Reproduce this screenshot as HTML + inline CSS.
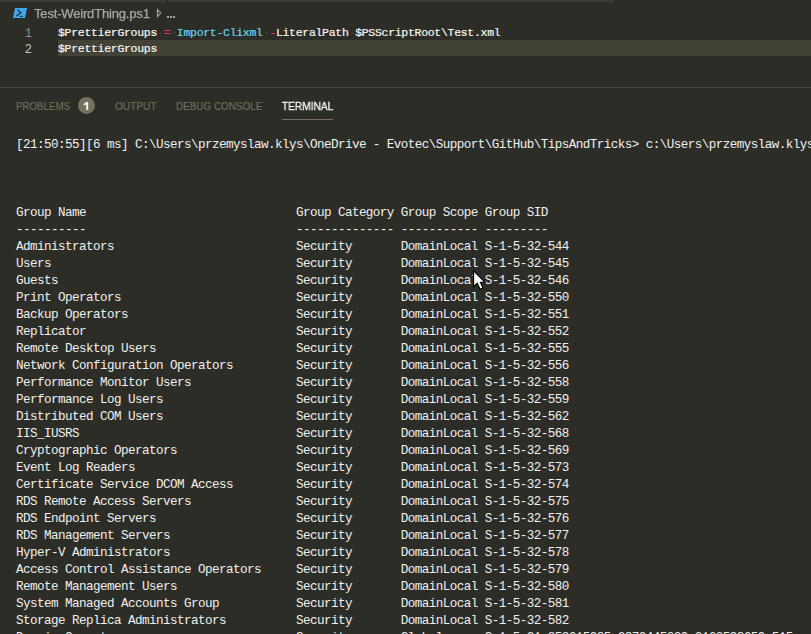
<!DOCTYPE html>
<html><head><meta charset="utf-8">
<style>
html,body{margin:0;padding:0;}
body{width:811px;height:634px;overflow:hidden;background:#2c2d26;position:relative;font-family:"Liberation Sans",sans-serif;}
.abs{position:absolute;}
#tabbar{left:167px;top:0;width:1px;height:2px;background:#23241f;}
#tabdiv2{left:615px;top:0;width:1px;height:2px;background:#23241f;}
#tab1{left:0;top:0;width:167px;height:2px;background:#3a3b35;}
#tab2{left:168px;top:0;width:447px;height:2px;background:#3a3b35;}
#crumb{left:34px;top:6px;font-size:13px;letter-spacing:-0.17px;color:#a8a8a6;-webkit-text-stroke:0.25px currentColor;will-change:transform;white-space:pre;line-height:16px;}
.ln{font-family:"Liberation Mono",monospace;font-size:12px;color:#90908a;width:32px;text-align:right;left:0;line-height:16px;margin-top:2px;}
.code{font-family:"Liberation Mono",monospace;font-size:11.5px;letter-spacing:-0.3px;color:#f8f8f2;-webkit-text-stroke:0.2px currentColor;left:58px;line-height:16px;white-space:pre;margin-top:1px;}
#hl{left:58px;top:40px;width:753px;height:16px;background:#424237;}
.ws{color:#464741;}
.op{color:#f92672;}
.fn{color:#66d9ef;}
#sep{left:0;top:87px;width:811px;height:1px;background:#47483f;}
.ptab{top:99px;font-size:11px;color:#75715e;line-height:14px;white-space:pre;will-change:transform;-webkit-text-stroke:0.15px currentColor;transform:scaleX(0.92);transform-origin:0 0;}
#badge{left:78px;top:97px;width:17px;height:17px;border-radius:50%;background:#75715e;color:#f8f8f2;font-size:11px;font-weight:bold;text-align:center;line-height:17px;will-change:transform;-webkit-text-stroke:0.2px currentColor;}
#uline{left:282px;top:119px;width:51px;height:1px;background:#75715e;}
#term{left:16px;top:137px;font-family:"Liberation Mono",monospace;font-size:12.6px;letter-spacing:-0.56px;line-height:17px;color:#f0f0f0;white-space:pre;}
</style></head><body>
<div class="abs" id="tab1"></div>
<div class="abs" id="tab2"></div>
<div class="abs" id="tabbar"></div>
<div class="abs" id="tabdiv2"></div>
<svg class="abs" style="left:10px;top:5px" width="20" height="16" viewBox="10 5 20 16">
<path d="M15 8 H27 L25 18 H13 Z" fill="#3fa7ee"/>
<path d="M17.4 9.6 L20.9 12.6 L16.4 16" stroke="#1d2b35" stroke-width="1.2" fill="none"/>
<path d="M19.8 16.4 H22.8" stroke="#1d2b35" stroke-width="1.1"/>
</svg>
<div class="abs" id="crumb">Test-WeirdThing.ps1</div>
<svg class="abs" style="left:150px;top:5px" width="30" height="17" viewBox="150 5 30 17"><path d="M157.5 9.5 L160.7 13 L157.5 16.5 Z" fill="none" stroke="#a8a8a4" stroke-width="1.1"/><rect x="167" y="16" width="2" height="2" fill="#a8a8a4"/><rect x="170" y="16" width="2" height="2" fill="#a8a8a4"/><rect x="173" y="16" width="2" height="2" fill="#a8a8a4"/></svg>
<div class="abs" id="hl"></div>
<div class="abs ln" style="top:24px">1</div>
<div class="abs ln" style="top:40px;color:#c2c2bf">2</div>
<div class="abs code" style="top:24px">$PrettierGroups<span class="ws">·</span><span class="op">=</span><span class="ws">·</span><span class="fn">Import-Clixml</span><span class="ws">·</span><span class="op">-</span>LiteralPath<span class="ws">·</span>$PSScriptRoot\Test.xml</div>
<div class="abs code" style="top:40px">$PrettierGroups</div>
<div class="abs" id="sep"></div>
<div class="abs ptab" style="left:16px;transform:scaleX(0.885)">PROBLEMS</div>
<div class="abs" id="badge"></div>
<svg class="abs" style="left:60px;top:90px" width="50" height="30" viewBox="60 90 50 30"><path d="M86 102 H88.2 V110 H86.2 V104.6 L83.7 105.5 V103.8 Q85.4 103.2 86 102 Z" fill="#f4f4f0"/></svg>
<div class="abs ptab" style="left:115px">OUTPUT</div>
<div class="abs ptab" style="left:176px;transform:scaleX(0.90)">DEBUG CONSOLE</div>
<div class="abs ptab" style="left:282px;color:#f8f8f2;-webkit-text-stroke:0.3px currentColor">TERMINAL</div>
<div class="abs" id="uline"></div>
<div class="abs" id="term">[21:50:55][6 ms] C:\Users\przemyslaw.klys\OneDrive - Evotec\Support\GitHub\TipsAndTricks&gt; c:\Users\przemyslaw.klys\OneDrive



Group Name                              Group Category Group Scope Group SID
----------                              -------------- ----------- ---------
Administrators                          Security       DomainLocal S-1-5-32-544
Users                                   Security       DomainLocal S-1-5-32-545
Guests                                  Security       DomainLocal S-1-5-32-546
Print Operators                         Security       DomainLocal S-1-5-32-550
Backup Operators                        Security       DomainLocal S-1-5-32-551
Replicator                              Security       DomainLocal S-1-5-32-552
Remote Desktop Users                    Security       DomainLocal S-1-5-32-555
Network Configuration Operators         Security       DomainLocal S-1-5-32-556
Performance Monitor Users               Security       DomainLocal S-1-5-32-558
Performance Log Users                   Security       DomainLocal S-1-5-32-559
Distributed COM Users                   Security       DomainLocal S-1-5-32-562
IIS_IUSRS                               Security       DomainLocal S-1-5-32-568
Cryptographic Operators                 Security       DomainLocal S-1-5-32-569
Event Log Readers                       Security       DomainLocal S-1-5-32-573
Certificate Service DCOM Access         Security       DomainLocal S-1-5-32-574
RDS Remote Access Servers               Security       DomainLocal S-1-5-32-575
RDS Endpoint Servers                    Security       DomainLocal S-1-5-32-576
RDS Management Servers                  Security       DomainLocal S-1-5-32-577
Hyper-V Administrators                  Security       DomainLocal S-1-5-32-578
Access Control Assistance Operators     Security       DomainLocal S-1-5-32-579
Remote Management Users                 Security       DomainLocal S-1-5-32-580
System Managed Accounts Group           Security       DomainLocal S-1-5-32-581
Storage Replica Administrators          Security       DomainLocal S-1-5-32-582
Domain Computers                        Security       Global      S-1-5-21-853615985-2870445339-3163598659-515</div>
<svg class="abs" style="left:465px;top:265px" width="30" height="30" viewBox="465 265 30 30"><path d="M473.6 270.8 V286.6 L477.2 283.1 L480.1 289.2 L483 288 L480.4 282.2 H484.8 Z" fill="#fff" stroke="#000" stroke-width="1.1" stroke-linejoin="miter"/></svg>
</body></html>
